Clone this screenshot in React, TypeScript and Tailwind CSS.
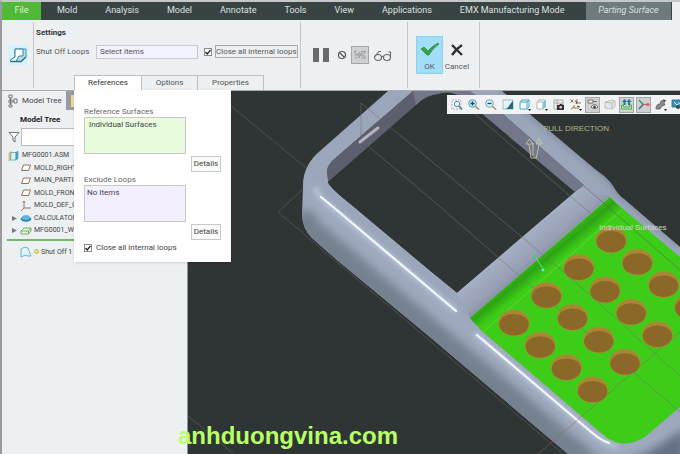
import { useState, type ReactNode } from 'react';

const menus = ['Mold', 'Analysis', 'Model', 'Annotate', 'Tools', 'View', 'Applications', 'EMX Manufacturing Mode'];

type TreeIcon = 'asm' | 'plane' | 'csys' | 'part' | 'workpiece';

const tree: { label: string; icon: TreeIcon; root?: boolean; expandable?: boolean }[] = [
  { label: 'MFG0001.ASM', icon: 'asm', root: true },
  { label: 'MOLD_RIGHT', icon: 'plane' },
  { label: 'MAIN_PARTING', icon: 'plane' },
  { label: 'MOLD_FRONT', icon: 'plane' },
  { label: 'MOLD_DEF_CS', icon: 'csys' },
  { label: 'CALCULATOR', icon: 'part', expandable: true },
  { label: 'MFG0001_WRK', icon: 'workpiece', expandable: true },
];

function TreeGlyph({ icon }: { icon: TreeIcon }) {
  return (
    <svg viewBox="0 0 12 12" className="size-[12px] shrink-0" fill="none">
      {icon === 'asm' && (
        <>
          <path d="M1 3l2-1.500v8L1 11z" fill="#e8c878" stroke="#b89445" strokeWidth=".5" />
          <path d="M3 2.500h5v7.500H2.500z" fill="#d9f1f8" stroke="#4a9fbe" strokeWidth=".8" />
          <path d="M8 2.500L10 1v7.500L8 10z" fill="#50a9cc" stroke="#3a87a8" strokeWidth=".5" />
        </>
      )}
      {icon === 'plane' && <path d="M3.500 3h7L8.500 8.500h-7z" fill="#fbfaf5" stroke="#8b7a62" />}
      {icon === 'csys' && <path d="M4 1v7h7M4 8l-3 3M2.800 2.500L4 1l1.200 1.500" stroke="#8b7a62" />}
      {icon === 'part' && (
        <>
          <ellipse cx="6" cy="7" rx="5.300" ry="2.800" fill="#2f83b5" />
          <ellipse cx="6" cy="5.500" rx="4" ry="2.500" fill="#63b7df" />
        </>
      )}
      {icon === 'workpiece' && (
        <path d="M1 6l3-3h7v3L8.500 9H1zM1 6h7.500L11 3M8.500 6v3" fill="#e6f7dc" stroke="#6aa757" strokeWidth=".9" />
      )}
    </svg>
  );
}

const toolbar: { label: string; pressed?: boolean; more?: boolean; art: ReactNode }[] = [
  {
    label: 'Refit',
    art: (
      <>
        <path d="M2 2h9v9H2z" fill="#f8f8f8" stroke="#9aa0a3" strokeWidth=".8" strokeDasharray="2 1" />
        <circle cx="7" cy="6" r="2.700" fill="#e6f4fa" stroke="#5e8ea2" />
        <path d="M9 8l3 3.500" stroke="#4b7f96" strokeWidth="1.500" />
      </>
    ),
  },
  {
    label: 'Zoom In',
    art: (
      <>
        <circle cx="5.500" cy="5.500" r="3.800" fill="#c9ebf5" stroke="#5c9eb5" />
        <path d="M8.500 8.500l3.500 3" stroke="#b77a60" strokeWidth="1.500" />
        <path d="M3.500 5.500h4M5.500 3.500v4" stroke="#174a66" strokeWidth="1.300" />
      </>
    ),
  },
  {
    label: 'Zoom Out',
    art: (
      <>
        <circle cx="5.500" cy="5.500" r="3.800" fill="#daf0f6" stroke="#6aa5b9" />
        <path d="M8.500 8.500l3.500 3" stroke="#b77a60" strokeWidth="1.500" />
        <path d="M3.500 5.500h4" stroke="#174a66" strokeWidth="1.300" />
      </>
    ),
  },
  {
    label: 'Repaint',
    art: (
      <>
        <path d="M2 2h10v9H2z" fill="#e3f3f8" stroke="#90b3bf" strokeWidth=".8" />
        <path d="M12 3v8H3c5 0 5-5 9-8z" fill="#256783" />
      </>
    ),
  },
  {
    label: 'Display Style',
    more: true,
    art: <path d="M2 4l2-2h7v7l-2 2H2zM2 4h7v7M9 4l2-2" fill="#edfaff" stroke="#4ca3c5" strokeWidth="1" />,
  },
  {
    label: 'Saved Orientations',
    more: true,
    art: (
      <>
        <path d="M2 4l2-2h6v7l-2 2H2zM2 4h6v7" fill="#f8fafb" stroke="#a1a8ab" strokeWidth=".8" />
        <path d="M8 4l3-2v7l-3 2z" fill="#80c5dc" />
      </>
    ),
  },
  {
    label: 'View Manager',
    art: (
      <>
        <path d="M2 2h9v9H2zM2 5h9M5 2v9" fill="#f4f4f4" stroke="#9a9a9a" strokeWidth=".8" />
        <path d="M5 7h2l1-1h2l1 1h1v5H5z" fill="#333" />
        <circle cx="8.700" cy="9.300" r="1.300" fill="#d6d6d6" />
      </>
    ),
  },
  {
    label: 'Datum Display',
    more: true,
    art: (
      <>
        <path d="M1.500 1.500l3 3m0-3l-3 3M8 1v4h4M5 7v3h5M2 11l3-2" fill="none" stroke="#997738" />
        <path d="M6 3l2 1-1 2M8 8l3 1" fill="none" stroke="#504c45" />
      </>
    ),
  },
  {
    label: 'Annotation Display',
    pressed: true,
    art: (
      <>
        <path d="M2 2h5v3H2zM7 3.500h4" fill="#f4f1e9" stroke="#70695d" strokeWidth=".9" />
        <path d="M5 9c2-3 5-3 7 0-2 2-5 2-7 0z" fill="#fff" stroke="#434343" strokeWidth=".8" />
        <circle cx="8.500" cy="9" r="1.300" fill="#333" />
      </>
    ),
  },
  {
    label: 'Perspective',
    art: <path d="M2 4l7-2 3 1v6l-3 2-7-1zM2 4l7 1v6M9 5l3-2" fill="#e4e5e6" stroke="#b1b4b6" strokeWidth=".8" />,
  },
  {
    label: 'Mold Display',
    pressed: true,
    art: (
      <>
        <path d="M1.500 7v4h10V7H9.500v2h-6V7z" fill="#b4ed9b" stroke="#439c48" strokeWidth=".8" />
        <path d="M4.500 1L2 4h1.500v3h2V4H7zM9 1L6.500 4H8v3h2V4h1.500z" fill="#207d9f" />
      </>
    ),
  },
  {
    label: 'Spin Center',
    pressed: true,
    art: (
      <>
        <path d="M2 2l4 4.500" stroke="#3e9d66" strokeWidth="1.500" />
        <path d="M6 6.500L2 11" stroke="#39718f" strokeWidth="1.500" />
        <path d="M6 6.500h4" stroke="#b66" strokeWidth="1.300" />
        <circle cx="11" cy="6.500" r="1.500" fill="#d95a50" />
      </>
    ),
  },
  {
    label: 'Simulate',
    more: true,
    art: (
      <>
        <path d="M2 11c0-3 1-5 4-5l1-3 4-1-1 3 1 2-3 1-2 3z" fill="#888c8f" stroke="#5c6063" strokeWidth=".8" />
        <path d="M9 2l3 1" stroke="#444" />
      </>
    ),
  },
  {
    label: 'Capture',
    art: (
      <>
        <path d="M1 2h11v7H1z" fill="#3b93b8" stroke="#286a88" strokeWidth=".8" />
        <path d="M3 4l3 3 4-3" stroke="#d9f1fa" fill="none" />
        <circle cx="7" cy="9" r="2" fill="#424a4e" />
      </>
    ),
  },
];

// Key openings of the calculator body, four rows of four
const keys = [0, 1, 2, 3].flatMap((col) =>
  [0, 1, 2, 3].map((row) => ({ x: 514 + row * 26.2 + col * 32.4, y: 323 + row * 22.3 - col * 27.7 })),
);

const BODY =
  'M388 91L320 151Q302 166 303 188L302 214Q302 228 312 238L337 260L430 337L568 454H680V247L624 199Q618 195 613 186Q608 178 596 170L502 91Z';
const OPENING =
  'M327 171Q327 166 333 160L413 91L470 91L502 113L555 160L584 185L575 192L457 293L430 271L350 204Q331 189 328 183Z';
const SHEET = 'M610 197Q616 204 622 208L680 257V407L646 436Q626 450 607 438L483 332L470 318Z';

function ModelScene() {
  return (
    <svg
      viewBox="188 91 492 363"
      preserveAspectRatio="xMaxYMin slice"
      className="absolute inset-0 size-full"
      role="img"
      aria-label="Calculator model"
    >
      <defs>
        <clipPath id="body"><path d={BODY} /></clipPath>
        <clipPath id="opening"><path d={OPENING} /></clipPath>
        <clipPath id="sheet"><path d={SHEET} /></clipPath>
        <linearGradient id="fillet" gradientUnits="userSpaceOnUse" x1="540" y1="257" x2="550" y2="269">
          <stop offset="0" stopColor="#33b516" />
          <stop offset=".35" stopColor="#2da413" />
          <stop offset="1" stopColor="#3dcc17" />
        </linearGradient>
        <linearGradient id="bar" gradientUnits="userSpaceOnUse" x1="515" y1="243" x2="538" y2="270">
          <stop offset="0" stopColor="#a5afc3" />
          <stop offset=".6" stopColor="#979fb4" />
          <stop offset="1" stopColor="#7b8398" />
        </linearGradient>
        <filter id="edge" x="-20%" y="-20%" width="140%" height="140%"><feGaussianBlur stdDeviation=".6" /></filter>
        <filter id="soft1" x="-20%" y="-20%" width="140%" height="140%"><feGaussianBlur stdDeviation="1" /></filter>
        <filter id="soft2" x="-20%" y="-20%" width="140%" height="140%"><feGaussianBlur stdDeviation="2" /></filter>
        <filter id="soft4" x="-20%" y="-20%" width="140%" height="140%"><feGaussianBlur stdDeviation="4" /></filter>
      </defs>

      <rect x="188" y="91" width="492" height="363" fill="#2f3534" />
      <path d="M231 106L322 181M278 212L326 168M278 212L568 458M188 416L234 454" fill="none" stroke="#5a5858" strokeWidth=".7" />

      <path d={BODY} fill="#9ca6ba" />
      <g clipPath="url(#body)" fill="none">
        <path d="M298 212Q300 226 314 238L600 478" stroke="#768190" strokeWidth="30" filter="url(#soft4)" />
        <path d="M309 183Q311 197 326 209L455 318L600 442Q625 462 680 420" stroke="#a0abc0" strokeWidth="9" filter="url(#soft4)" />
        <path d="M502 89L598 168Q610 177 616 189L682 244" stroke="#737c91" strokeWidth="5" filter="url(#soft4)" />
        <path d="M600 170Q614 181 622 192L680 240" stroke="#6b7388" strokeWidth="4" filter="url(#soft1)" />
        <path d="M610 462Q634 466 684 428V462H610z" fill="#667085" filter="url(#soft4)" />
      </g>
      <path d="M580 188L610 196L470 318L457 293Z" fill="url(#bar)" />

      <g clipPath="url(#opening)">
        <path d={OPENING} fill="#2f3534" />
        <path d="M326 162L413 86L440 86V94Q426 95 416 105L328 182z" fill="#5d5f6e" />
        <path d="M416 105Q426 94 442 93Q452 91 462 97L575 192L590 188L470 86H412z" fill="#727789" />
        <path d="M440 86Q455 86 470 91L502 113L590 188V180L500 91z" fill="#9da7bc" />
      </g>
      <path d="M360 142L378 128" stroke="#b6b8c5" strokeWidth="3" strokeLinecap="round" />
      <path d="M360 144L379 129" stroke="#777" strokeWidth=".7" />

      <g fill="none" strokeLinecap="round" stroke="#c9d4e8">
        <path d="M316 189Q320 199 331 207L455 310" strokeWidth="5" opacity=".6" filter="url(#soft2)" />
        <path d="M321 197L332 206L456 311" stroke="#f4f8ff" strokeWidth="2.200" filter="url(#edge)" />
        <path d="M476 335L590 431Q602 442 615 446" strokeWidth="5" opacity=".6" filter="url(#soft2)" />
        <path d="M477 335L590 431Q600 440 609 443" stroke="#f4f8ff" strokeWidth="2.200" filter="url(#edge)" />
      </g>

      <path d={SHEET} fill="#3dcc17" />
      <g clipPath="url(#sheet)">
        <path d="M610 197L624 208L483 333L466 318z" fill="url(#fillet)" />
        <path d="M622 210L483 332" stroke="#65dc3f" strokeWidth=".8" />
        {keys.map((k) => (
          <g key={`${k.x}-${k.y}`}>
            <ellipse cx={k.x} cy={k.y} rx="15.500" ry="13.300" fill="#a88634" stroke="#7fab28" strokeWidth=".8" />
            <path
              d={`M${k.x - 14.8} ${k.y + 1.5}C${k.x - 14} ${k.y - 12.5} ${k.x + 14} ${k.y - 12.5} ${k.x + 14.8} ${k.y + 1.5}C${k.x + 13.5} ${k.y + 16} ${k.x - 13.5} ${k.y + 16} ${k.x - 14.8} ${k.y + 1.5}Z`}
              fill="#8c6828"
            />
          </g>
        ))}
      </g>

      <g fill="none" stroke="#77706e" strokeWidth=".7" opacity=".75">
        <path d="M361 137V103L430 160L572 279L680 376" />
        <path d="M368 146L430 198L515 272L680 412" />
        <path d="M474 113L570 196L600 221" />
        <path d="M584 186L680 270" stroke="#5d5b55" />
        <path d="M538 454L680 332" stroke="#91645a" />
      </g>

      <path d="M535 256L543 269" stroke="#52e3a0" />
      <circle cx="535" cy="256" r="1.500" fill="#32de58" />
      <circle cx="543" cy="270" r="1.500" fill="#5ce9d0" />
      <path
        d="M531 158L529 144H526L529.500 139L533 144H530M536.500 158L539 144H536L539 138.500L542 144H539M531 158H536.500M533 156V143"
        fill="none"
        stroke="#cbc9a2"
        strokeWidth=".9"
      />
      <g className="font-['Liberation_Sans',sans-serif] text-[8px]">
        <text x="543" y="131" fill="#b8b685">PULL DIRECTION</text>
        <text x="599" y="230" fill="#cddcc8">Individual Surfaces</text>
      </g>
    </svg>
  );
}

function Toolbar() {
  return (
    <div className="absolute right-0 top-[4px] flex h-[19px] w-[233px] items-center gap-[2px] overflow-hidden bg-[#f1f2f3] pl-[2px]">
      {toolbar.map((t) => (
        <button
          key={t.label}
          aria-label={t.label}
          className={`relative flex h-[16px] w-[15px] shrink-0 items-center justify-center ${t.pressed ? 'border border-[#a3a5a6] bg-[#cfd0d1]' : ''}`}
        >
          <svg viewBox="0 0 13 13" className="size-[13px] shrink-0" fill="none">
            {t.art}
            {t.more && <path d="M10 11h3l-1.500 2z" fill="#222" />}
          </svg>
        </button>
      ))}
    </div>
  );
}

function Check({ id, checked, onChange }: { id: string; checked: boolean; onChange: (v: boolean) => void }) {
  return (
    <span className="relative flex size-[8px] shrink-0">
      <input
        id={id}
        type="checkbox"
        checked={checked}
        onChange={(e) => onChange(e.target.checked)}
        className="size-[8px] appearance-none border border-[#8b8b8b] bg-white"
      />
      {checked && (
        <svg viewBox="0 0 8 8" className="pointer-events-none absolute inset-0 size-[8px]" fill="none">
          <path d="M1.500 4L3.300 6L6.500 1.800" stroke="#222" strokeWidth="1.300" />
        </svg>
      )}
    </span>
  );
}

function ReferencesPanel({ closeLoops, setCloseLoops }: { closeLoops: boolean; setCloseLoops: (v: boolean) => void }) {
  const collectors = [
    { id: 'reference-surfaces', label: 'Reference Surfaces', value: 'Individual Surfaces', tone: 'bg-[#e8fbdc] pl-[4px]' },
    { id: 'exclude-loops', label: 'Exclude Loops', value: 'No Items', tone: 'bg-[#f3efff] pl-[2px]' },
  ];

  return (
    <div className="absolute left-0 top-full z-10 w-[157px] bg-white px-[10px] pb-[9px] pt-[16px] text-[#444] shadow-sm">
      {collectors.map((c) => (
        <div key={c.id} className="flex flex-col">
          <label htmlFor={c.id} className="h-[11px] leading-[11px] text-[#666]">{c.label}</label>
          <textarea
            id={c.id}
            readOnly
            value={c.value}
            className={`h-[37px] w-[102px] resize-none overflow-hidden border border-[#c8c8c8] pt-[1px] leading-[12px] ${c.tone}`}
          />
          <button className="mb-[2px] mt-[2px] h-[16px] w-[30px] self-end border border-[#c9c9c9] bg-[#f9f9f9] leading-[12px]">
            Details
          </button>
        </div>
      ))}
      <div className="flex h-[11px] items-center gap-[4px]">
        <Check id="panel-close-loops" checked={closeLoops} onChange={setCloseLoops} />
        <label htmlFor="panel-close-loops">Close all internal loops</label>
      </div>
    </div>
  );
}

function Ribbon() {
  const [tab, setTab] = useState('References');
  const [closeLoops, setCloseLoops] = useState(true);
  const tabs = [
    { label: 'References', width: 'w-[68px]' },
    { label: 'Options', width: 'w-[56px]' },
    { label: 'Properties', width: 'w-[66px]' },
  ];

  return (
    <div className="flex h-[71px] border-b border-[#a9adb0] bg-[#edf0f2] text-[#555]">
      <div className="my-[2px] flex w-[32px] items-center justify-center border-r border-[#c3c6c9]">
        <svg viewBox="0 0 22 22" className="size-[22px]" fill="none">
          <path d="M1 1h20v20H1z" fill="#d8f2fb" />
          <path d="M8 5h11v8l-5 4.500H3.500V16L8 13z" fill="#b9e2f0" stroke="#4591af" />
          <path d="M8 5h8v7H12L9 17.500H3.500V16L8 13z" fill="#f8fdff" stroke="#397f9f" />
          <path d="M19 13l-5 4.500H3.500" stroke="#2b7394" strokeWidth="1.500" />
        </svg>
      </div>

      <div className="flex w-[266px] flex-col">
        <h2 className="ml-[2px] mt-[7px] h-[12px] font-bold leading-[12px] text-[#333]">Settings</h2>
        <div className="ml-[2px] mt-[5px] flex h-[15px] items-center">
          <label htmlFor="loops" className="w-[60px] whitespace-nowrap">Shut Off Loops</label>
          <input
            id="loops"
            defaultValue="Select items"
            className="mr-[6px] h-[14px] w-[102px] border border-[#c8c8cf] bg-[#f3f0ff] px-[3px]"
          />
          <Check id="close-loops" checked={closeLoops} onChange={setCloseLoops} />
          <label htmlFor="close-loops" className="ml-[3px] whitespace-nowrap border border-[#aaa] leading-[11px]">
            Close all internal loops
          </label>
        </div>
        <div className="relative ml-[40px] mt-auto flex h-[15px] w-[190px]">
          {tabs.map((t) => (
            <button
              key={t.label}
              onClick={() => setTab(t.label)}
              className={`border-r border-t border-[#bcbfc1] leading-[14px] first:border-l ${t.width} ${tab === t.label ? 'bg-white text-[#333]' : 'bg-[#edf0f2]'}`}
            >
              {t.label}
            </button>
          ))}
          {tab === 'References' && <ReferencesPanel closeLoops={closeLoops} setCloseLoops={setCloseLoops} />}
        </div>
      </div>

      <div className="my-[2px] flex w-[108px] items-center gap-[4px] border-x border-[#c3c6c9] pl-[12px]">
        <button aria-label="Pause" className="mr-[4px] flex h-[14px] w-[16px] justify-between">
          <span className="h-full w-[6px] bg-[#686a6b]" />
          <span className="h-full w-[6px] bg-[#686a6b]" />
        </button>
        <button aria-label="No preview">
          <svg viewBox="0 0 10 10" className="size-[10px]" fill="none" stroke="#555">
            <circle cx="5" cy="5" r="3.500" strokeWidth="1.200" />
            <path d="M2.500 2.500l5 5" strokeWidth="1.200" />
          </svg>
        </button>
        <button aria-label="Attached preview" className="border border-[#a2a5a7] bg-[#ced1d3]">
          <svg viewBox="0 0 16 16" className="size-[16px]" fill="none" stroke="#888b8d" strokeWidth=".9">
            <path d="M2 5l2-1v8M5 7l3 3M7 5v6l3-7v8M12 4v8l2-2M12 4l2 1" strokeDasharray="3 1" />
          </svg>
        </button>
        <button aria-label="Verify">
          <svg viewBox="0 0 19 13" className="h-[13px] w-[19px]" fill="none" stroke="#666" strokeWidth="1.100">
            <ellipse cx="5" cy="8.500" rx="3.500" ry="3" />
            <ellipse cx="14" cy="8.500" rx="3.500" ry="3" />
            <path d="M8.500 8q1-1.500 2 0M1.500 8L6 2.500h2M17.500 8V3h-2" />
          </svg>
        </button>
      </div>

      <div className="my-[2px] flex w-[72px] items-center border-r border-[#c3c6c9] pl-[8px]">
        <button className="flex h-[38px] w-[27px] flex-col items-center justify-between border border-[#8bd0f1] bg-[#a3def9] pt-[5px]">
          <svg viewBox="0 0 20 14" className="h-[14px] w-[20px]">
            <path d="M1 7l3-2 4 4Q12 4 18 1l1 1Q12 7 9 13H7z" fill="#35a344" stroke="#237d33" strokeWidth=".6" />
          </svg>
          <span className="leading-[13px]">OK</span>
        </button>
        <button className="flex h-[38px] w-[28px] flex-col items-center justify-between pb-[1px] pt-[8px]">
          <svg viewBox="0 0 14 12" className="h-[12px] w-[14px]" fill="none" stroke="#333" strokeWidth="2.400">
            <path d="M2 1l10 10M12 1Q6 5 2 11" />
          </svg>
          <span className="leading-[13px]">Cancel</span>
        </button>
      </div>
    </div>
  );
}

function ModelTree() {
  return (
    <aside className="w-[186px] shrink-0 border-r border-[#8e9496] bg-[#ecf0f3] text-[7px] text-[#444]">
      <div className="flex h-[19px] bg-[#999c9e]">
        <button className="flex w-[64px] items-center gap-[4px] bg-[#edf0f2] pl-[6px] text-[8px]">
          <svg viewBox="0 0 10 14" className="h-[14px] w-[10px] shrink-0" fill="none" stroke="#777">
            <path d="M1 1h3v3H1zM1 6h3v3H1zM1 11h3v2H1zM6 5h3v4H6zM4 7h2M2.500 4v7" />
          </svg>
          Model Tree
        </button>
        <span className="ml-[5px] mt-[4px] h-[12px] w-[12px] bg-[#f5d69c]" />
      </div>
      <h2 className="ml-[18px] h-[18px] text-[8px] font-bold leading-[19px] text-[#222]">Model Tree</h2>
      <div className="flex h-[18px] items-center pl-[6px]">
        <svg viewBox="0 0 12 12" className="size-[12px]" fill="none">
          <path d="M1 1.500h10L7 6v5L5 9.500V6z" fill="#fff" stroke="#6d7275" />
        </svg>
        <input aria-label="Filter tree" className="ml-[1px] h-[18px] w-[130px] border border-[#bbb] bg-white" />
      </div>
      <ul className="mt-[3px]">
        {tree.map((n) => (
          <li
            key={n.label}
            className={`flex items-center gap-[2px] whitespace-nowrap odd:h-[13px] even:h-[12px] ${n.root ? 'pl-[6px]' : 'pl-[9px]'}`}
          >
            {!n.root && (
              <svg viewBox="0 0 7 7" className="size-[7px] shrink-0">
                {n.expandable && <path d="M1 1l5 2.500L1 6z" fill="#777" />}
              </svg>
            )}
            <TreeGlyph icon={n.icon} />
            {n.label}
          </li>
        ))}
      </ul>
      <div className="ml-[5px] mt-[2px] h-[2px] w-[160px] bg-[#74b867]" />
      <div className="mt-[4px] flex h-[14px] items-center gap-[2px] pl-[18px]">
        <svg viewBox="0 0 12 12" className="size-[12px]">
          <path d="M1 3Q4 0 8 2l3 8H8Q5 8 1 11z" fill="#dff5fa" stroke="#6da9bd" strokeWidth=".9" />
        </svg>
        <svg viewBox="0 0 5 5" className="mb-[2px] size-[5px]">
          <circle cx="2.500" cy="2.500" r="2" fill="#efe86a" stroke="#a9a435" strokeWidth=".7" />
        </svg>
        Shut Off 1
      </div>
    </aside>
  );
}

export default function App() {
  return (
    <div className="relative flex min-h-screen flex-col border-l-2 border-t-2 border-l-[#989b9d] border-t-[#c5c8ca] bg-[#edf0f2] font-['Roboto','Noto_Sans',sans-serif] text-[8px]">
      <nav className="flex h-[18px] bg-[#edf0f2] pr-[8px] text-[9px] text-[#dde1e2]">
        <button className="w-[39px] bg-[#50b937] text-[#d8f8c8]">File</button>
        <div className="flex flex-1 whitespace-nowrap bg-[#3a4343] pl-[2px]">
          {menus.map((m) => (
            <button key={m} className="px-[14px]">{m}</button>
          ))}
        </div>
        <button className="w-[86px] border-r border-[#3a4343] bg-[#6e7a7b] italic">Parting Surface</button>
      </nav>
      <Ribbon />
      <main className="flex flex-1">
        <ModelTree />
        <div className="relative flex-1 overflow-hidden bg-[#2f3534]">
          <ModelScene />
          <Toolbar />
        </div>
      </main>
      <p className="absolute bottom-[4px] left-[176px] font-['Liberation_Sans',sans-serif] text-[24px] font-bold leading-[28px] text-[#b9ff66]">
        anhduongvina.com
      </p>
    </div>
  );
}
